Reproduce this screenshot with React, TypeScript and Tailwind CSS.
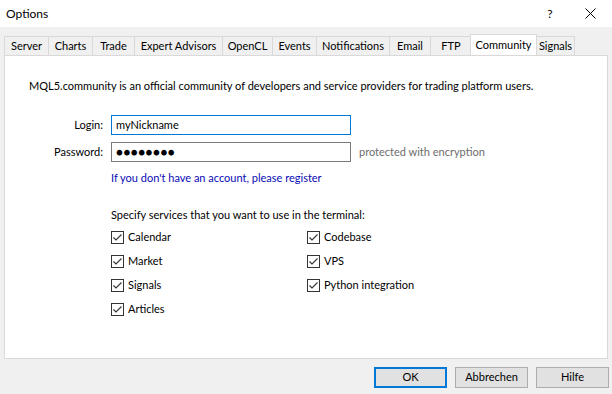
import React from 'react';

const TABS: { label: string; w: string; active?: boolean }[] = [
  { label: 'Server', w: 'w-[44px]' },
  { label: 'Charts', w: 'w-[44px]' },
  { label: 'Trade', w: 'w-[42px]' },
  { label: 'Expert Advisors', w: 'w-[88px]' },
  { label: 'OpenCL', w: 'w-[50px]' },
  { label: 'Events', w: 'w-[44px]' },
  { label: 'Notifications', w: 'w-[73px]' },
  { label: 'Email', w: 'w-[41px]' },
  { label: 'FTP', w: 'w-[41px]' },
  { label: 'Community', w: 'w-[67px]', active: true },
  { label: 'Signals', w: 'w-[39px]' },
];

const LEFT_SERVICES = ['Calendar', 'Market', 'Signals', 'Articles'];
const RIGHT_SERVICES = ['Codebase', 'VPS', 'Python integration'];

const CheckBox: React.FC<{ label: string }> = ({ label }) => (
  <div className="flex items-center h-[24px]">
    <svg width="13" height="13" viewBox="0 0 13 13" className="shrink-0">
      <rect x="0.5" y="0.5" width="12" height="12" fill="#fff" stroke="#333" />
      <path d="M2.5 6.5 L5 9 L10.5 3.5" fill="none" stroke="#333" strokeWidth="1.1" />
    </svg>
    <span className="ml-[4px]">{label}</span>
  </div>
);

export default function App() {
  return (
    <div
      className="w-[612px] h-[394px] flex flex-col bg-[#f0f0f0] text-[11px] text-black overflow-hidden whitespace-nowrap"
      style={{ fontFamily: 'Lato, "Noto Sans", sans-serif' }}
    >
      {/* Title bar */}
      <div className="h-[27px] shrink-0 bg-white flex items-center pl-[6px] text-[12px]">
        <span className="flex-1">Options</span>
        <span className="w-[14px] text-center mr-[28px]">?</span>
        <svg width="11" height="11" viewBox="0 0 11 11" className="mr-[16px]">
          <path d="M0.5 0.5 L10.5 10.5 M10.5 0.5 L0.5 10.5" stroke="#000" strokeWidth="1" />
        </svg>
      </div>

      {/* Tabs */}
      <div className="flex items-end h-[28px] pl-[4px] shrink-0">
        {TABS.map((t) =>
          t.active ? (
            <div
              key={t.label}
              className={`${t.w} h-[21px] -mx-[1px] relative z-10 bg-white border border-b-0 border-[#d9d9d9] flex items-start justify-center pt-[2px]`}
            >
              {t.label}
            </div>
          ) : (
            <div
              key={t.label}
              className={`${t.w} h-[19px] bg-[#f0f0f0] border border-r-0 last:border-r border-b-0 border-[#d9d9d9] flex items-center justify-center`}
            >
              {t.label}
            </div>
          )
        )}
      </div>

      {/* Panel */}
      <div className="mx-[4px] h-[304px] shrink-0 bg-white border border-[#d9d9d9] pl-[24px] pt-[22px]">
        <p className="h-[16px] leading-[16px]">
          MQL5.community is an official community of developers and service providers for trading platform users.
        </p>

        <div className="mt-[21px] flex items-center">
          <span className="w-[74px] text-right">Login:</span>
          <div className="ml-[8px] w-[240px] h-[20px] border border-[#0078d7] flex items-center pl-[4px]">
            myNickname
          </div>
        </div>
        <div className="mt-[7px] flex items-center">
          <span className="w-[74px] text-right">Password:</span>
          <div className="ml-[8px] w-[240px] h-[20px] border border-[#7a7a7a] flex items-center pl-[4px] tracking-[0.5px] text-[11.5px]">
            ●●●●●●●●
          </div>
          <span className="ml-[8px] text-[#6d6d6d]">protected with encryption</span>
        </div>

        <div className="pl-[82px]">
          <p className="mt-[8px] h-[16px] leading-[16px] text-[#0a0ab4]">
            If you don't have an account, please register
          </p>
          <p className="mt-[21px] h-[16px] leading-[16px]">Specify services that you want to use in the terminal:</p>
          <div className="mt-[2px] flex">
            <div className="w-[196px] flex flex-col">
              {LEFT_SERVICES.map((s) => (
                <CheckBox key={s} label={s} />
              ))}
            </div>
            <div className="flex flex-col">
              {RIGHT_SERVICES.map((s) => (
                <CheckBox key={s} label={s} />
              ))}
            </div>
          </div>
        </div>
      </div>

      {/* Buttons */}
      <div className="flex justify-end gap-[8px] pr-[3px] mt-[8px]">
        <button className="w-[73px] h-[21px] bg-[#e1e1e1] border-2 border-[#0078d7]">OK</button>
        <button className="w-[73px] h-[21px] bg-[#e1e1e1] border border-[#adadad]">Abbrechen</button>
        <button className="w-[73px] h-[21px] bg-[#e1e1e1] border border-[#adadad]">Hilfe</button>
      </div>
    </div>
  );
}
